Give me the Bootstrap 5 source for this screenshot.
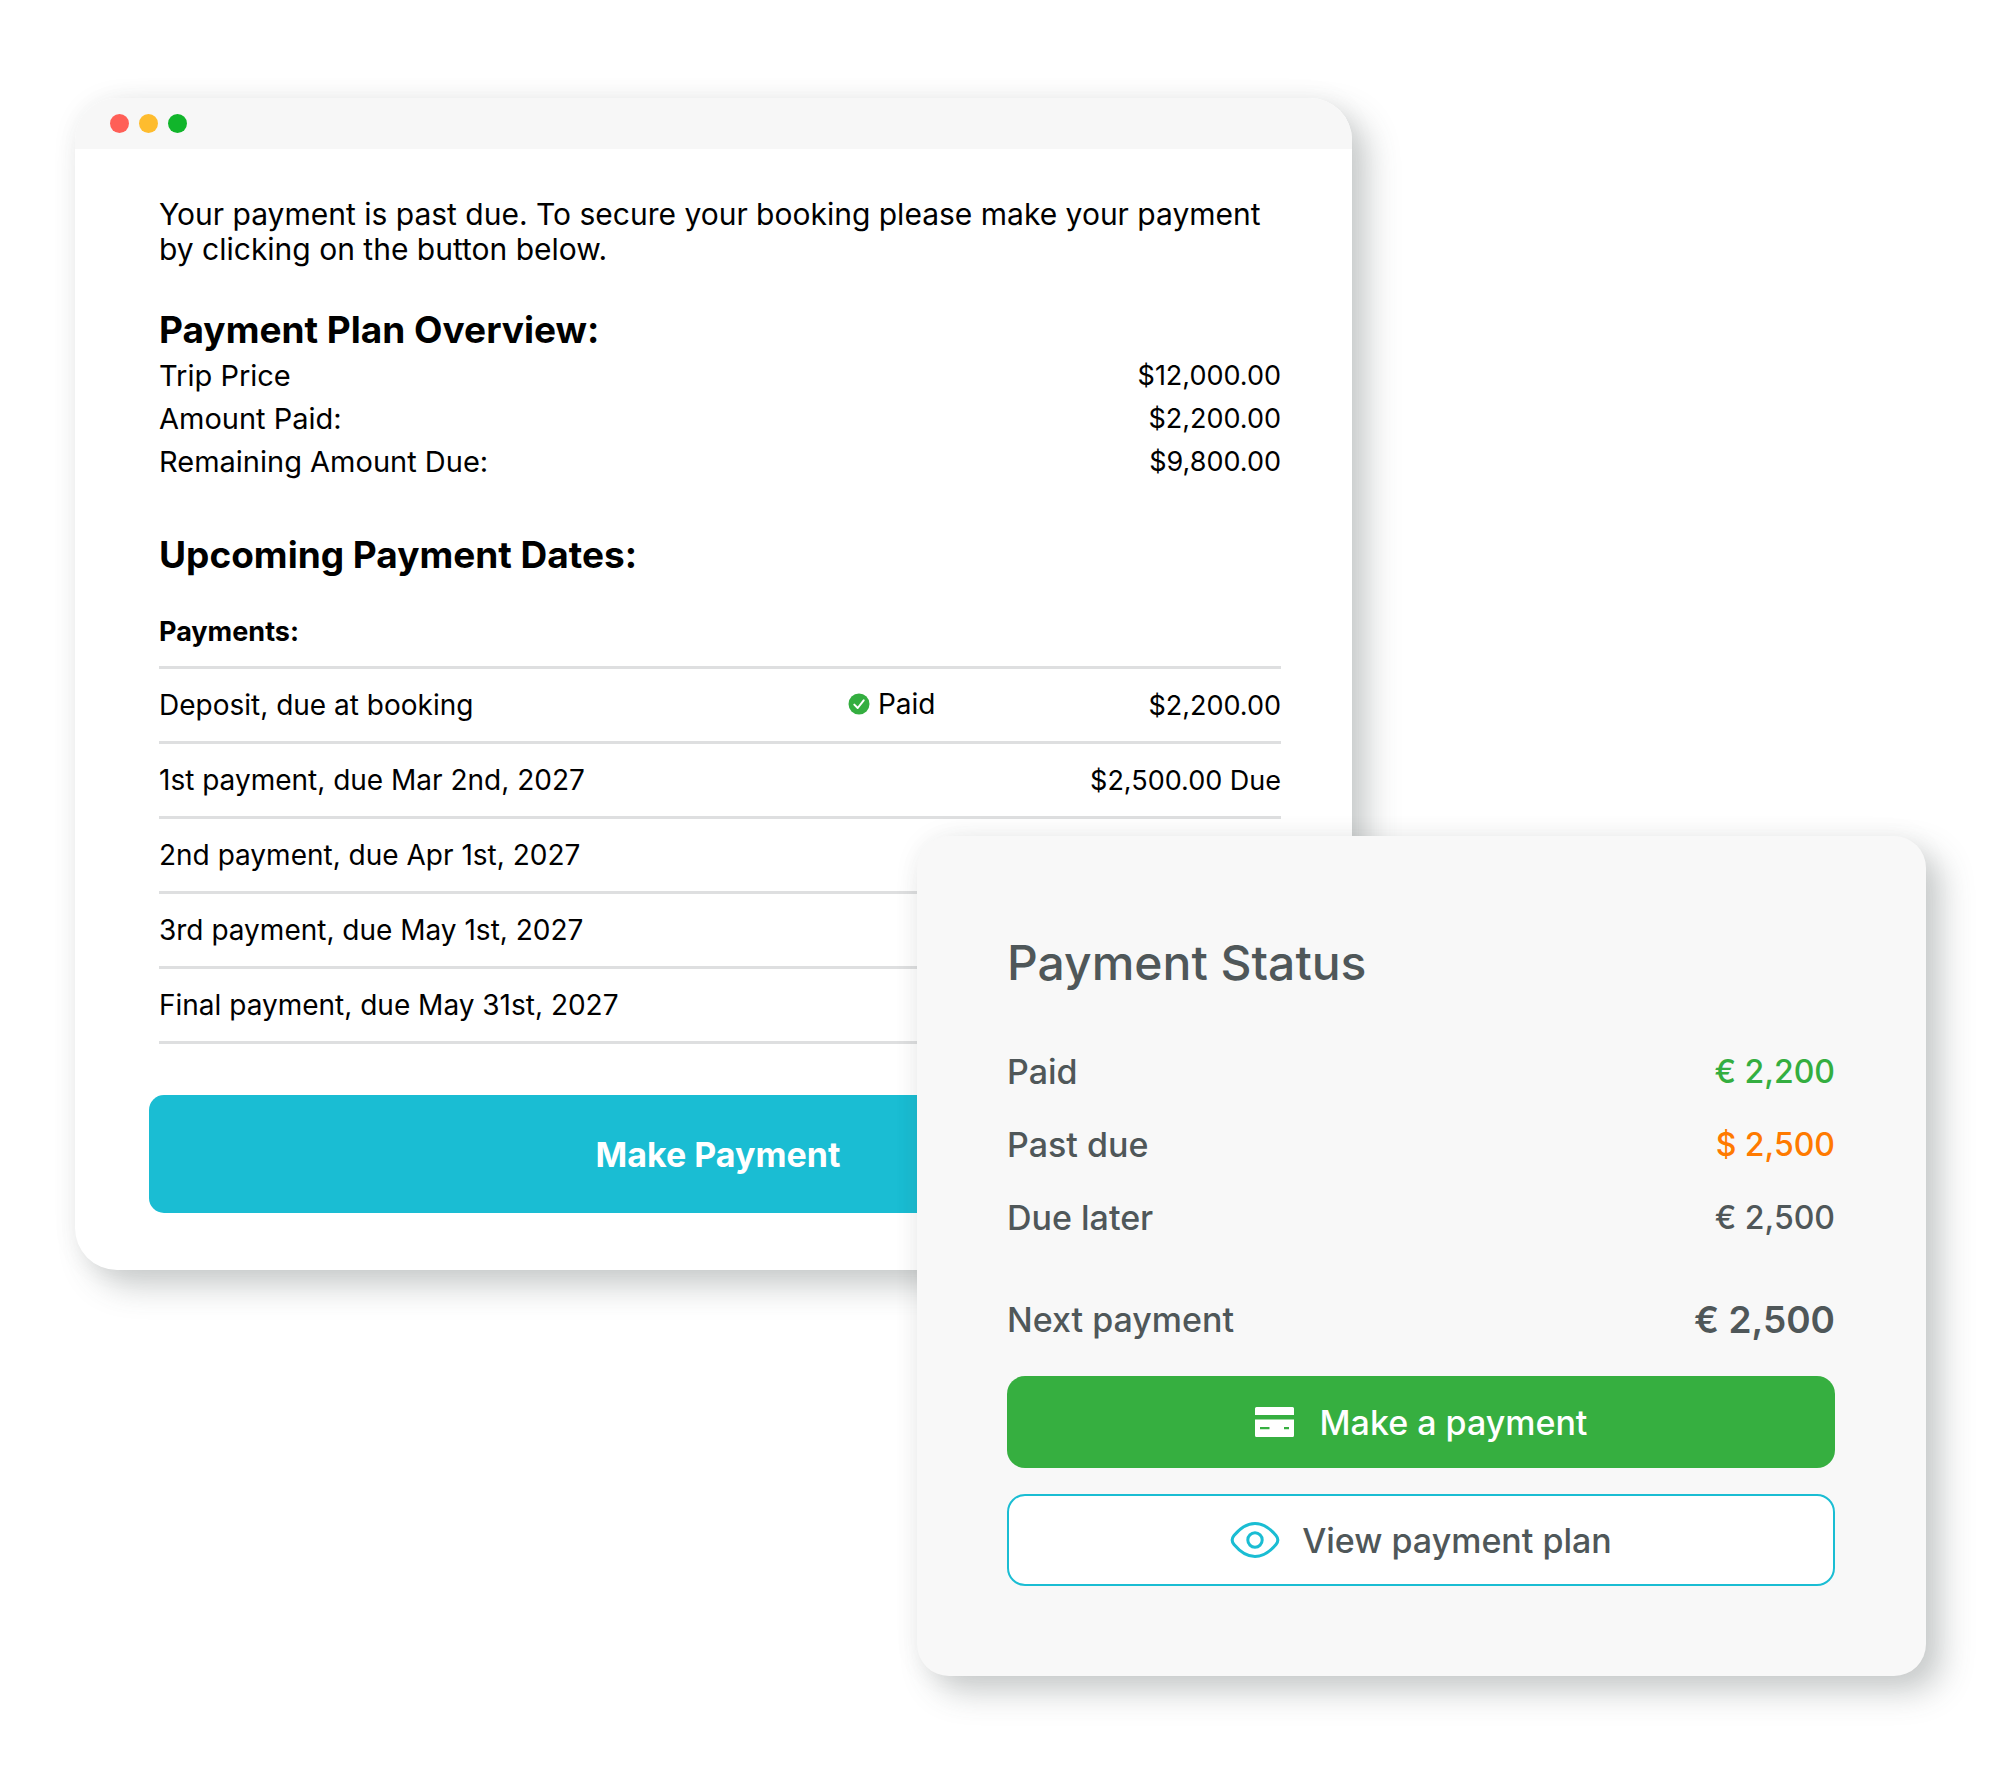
<!DOCTYPE html>
<html lang="en">
<head>
<meta charset="utf-8">
<meta name="viewport" content="width=device-width, initial-scale=1">
<title>Payment overview</title>
<link href="https://cdn.jsdelivr.net/npm/bootstrap@5.3.0/dist/css/bootstrap.min.css" rel="stylesheet">
<style>
  body { font-family: Inter, "Open Sans", sans-serif; background: #fff; color: #000; }
  .stage { padding: 98px 0; overflow: hidden; }
  .pane { box-shadow: 16px 16px 32px rgba(70, 80, 80, .28), 0 0 28px rgba(0, 0, 0, .05); }

  .browser { width: 63.85%; margin-left: 3.75%; border-radius: 42px; background: #fff; }
  .browser-bar { height: 51px; padding-left: 35px; gap: 10px; border-radius: 42px 42px 0 0; background: #f7f7f7; }
  .dot { width: 19px; height: 19px; }
  .dot-red { background: #ff5f57; }
  .dot-amber { background: #febc2e; }
  .dot-green { background: #11b52b; }

  .browser-body { padding: 48px 71px 0 84px; font-size: 30px; line-height: 35px; }
  .section-title { font-size: 37px; line-height: 44px; font-weight: 700; margin: 41px 0 4px; }
  .totals { font-size: 29px; line-height: 40px; }
  .totals > div + div { margin-top: 3px; }
  .sum { font-size: 27px; }
  .section-title.dates { margin-top: 51px; margin-bottom: 35px; }

  .schedule { border-collapse: separate; border-spacing: 0; color: #000; }
  .schedule > :not(caption) > * > * {
    height: 75px; padding: 0; border-bottom: 3px solid #dedfe0;
    font-size: 28px; line-height: 35px; vertical-align: middle; color: #000;
  }
  .schedule > tbody > tr > .sum { font-size: 27px; }
  .schedule > thead > tr > th { height: 57px; padding-bottom: 14px; font-size: 27px; line-height: 40px; }
  .col-name { width: 61.4%; }
  .check { width: 22px; height: 22px; }

  .browser-foot { padding: 51px 65px 57px 74px; }
  .btn-plan {
    --bs-btn-color: #fff; --bs-btn-bg: #1abdd3; --bs-btn-hover-color: #fff; --bs-btn-hover-bg: #17a9bd;
    height: 118px; border: 0; border-radius: 15px; font-size: 34px; font-weight: 700;
  }

  .status { width: 50.45%; margin: -434px 3.7% 0 auto; padding: 99px 91px 90px 90px; border-radius: 32px; background: #f8f8f8; color: #4f5759; font-size: 34px; font-weight: 500; }
  .status-title { font-size: 48px; line-height: 56px; font-weight: 500; margin: 0 0 44px; }
  .status-row { line-height: 73px; }
  .status-sum { font-size: 32px; }
  .next-row { margin-top: 29px; margin-bottom: 20px; }
  .next-sum { font-size: 37px; font-weight: 600; }
  .ok { color: #34ae40; }
  .late { color: #ff7a00; }
  .btn-status { height: 92px; border-radius: 18px; font-size: 34px; font-weight: 500; }
  .btn-pay {
    --bs-btn-color: #fff; --bs-btn-bg: #36af40; --bs-btn-hover-color: #fff; --bs-btn-hover-bg: #2f9c38;
    border: 0; gap: 26px; margin-bottom: 26px;
  }
  .btn-view {
    --bs-btn-color: #4f5759; --bs-btn-bg: #fff; --bs-btn-border-color: #1abdd3;
    --bs-btn-hover-color: #4f5759; --bs-btn-hover-bg: #eefafc; --bs-btn-hover-border-color: #1abdd3;
    border-width: 2px; gap: 22px;
  }
</style>
</head>
<body>
<main class="stage">
  <section class="browser pane">
    <div class="browser-bar d-flex align-items-center">
      <span class="dot dot-red rounded-circle"></span>
      <span class="dot dot-amber rounded-circle"></span>
      <span class="dot dot-green rounded-circle"></span>
    </div>
    <div class="browser-body">
      <p class="m-0">Your payment is past due. To secure your booking please make your payment by clicking on the button below.</p>
      <h2 class="section-title">Payment Plan Overview:</h2>
      <div class="totals">
        <div class="d-flex justify-content-between"><span>Trip Price</span><span class="sum">$12,000.00</span></div>
        <div class="d-flex justify-content-between"><span>Amount Paid:</span><span class="sum">$2,200.00</span></div>
        <div class="d-flex justify-content-between"><span>Remaining Amount Due:</span><span class="sum">$9,800.00</span></div>
      </div>
      <h2 class="section-title dates">Upcoming Payment Dates:</h2>
      <table class="table schedule m-0">
        <thead>
          <tr><th class="col-name" scope="col">Payments:</th><th></th><th></th></tr>
        </thead>
        <tbody>
          <tr>
            <td>Deposit, due at booking</td>
            <td><span class="d-inline-flex align-items-center gap-2">
              <svg class="check" viewBox="0 0 22 22" aria-hidden="true"><circle cx="11" cy="11" r="10.5" fill="#34ae40"/><path d="M6.3 11.6l3.4 3.4 6-7.6" fill="none" stroke="#fff" stroke-width="2" stroke-linecap="round" stroke-linejoin="round"/></svg>
              Paid</span></td>
            <td class="sum text-end">$2,200.00</td>
          </tr>
          <tr><td>1st payment, due Mar 2nd, 2027</td><td class="sum text-end" colspan="2">$2,500.00 Due</td></tr>
          <tr><td>2nd payment, due Apr 1st, 2027</td><td colspan="2"></td></tr>
          <tr><td>3rd payment, due May 1st, 2027</td><td colspan="2"></td></tr>
          <tr><td>Final payment, due May 31st, 2027</td><td colspan="2"></td></tr>
        </tbody>
      </table>
    </div>
    <div class="browser-foot">
      <button type="button" class="btn btn-plan w-100">Make Payment</button>
    </div>
  </section>

  <section class="status pane position-relative">
    <h1 class="status-title">Payment Status</h1>
    <div class="status-row d-flex justify-content-between"><span>Paid</span><span class="status-sum ok">€ 2,200</span></div>
    <div class="status-row d-flex justify-content-between"><span>Past due</span><span class="status-sum late">$ 2,500</span></div>
    <div class="status-row d-flex justify-content-between"><span>Due later</span><span class="status-sum">€ 2,500</span></div>
    <div class="status-row next-row d-flex justify-content-between"><span>Next payment</span><span class="next-sum">€ 2,500</span></div>
    <button type="button" class="btn btn-status btn-pay w-100 d-flex align-items-center justify-content-center">
      <svg width="39" height="30" viewBox="0 0 39 30" aria-hidden="true"><path fill="#fff" d="M1.500 0h36A1.500 1.500 0 0 1 39 1.500V8H0V1.500A1.500 1.500 0 0 1 1.500 0z"/><path fill="#fff" fill-rule="evenodd" d="M0 12.500h39v16a1.500 1.500 0 0 1-1.500 1.500h-36A1.500 1.500 0 0 1 0 28.500zM5 20v2.200h9.500V20zM29 20v2.200h5V20z"/></svg>
      Make a payment
    </button>
    <button type="button" class="btn btn-status btn-view w-100 d-flex align-items-center justify-content-center">
      <svg width="50" height="38" viewBox="0 0 50 38" fill="none" stroke="#1abdd3" stroke-width="3" aria-hidden="true"><path d="M4 14.500C9 8.500 17 2.500 25 2.500S41 8.500 46 14.500C48.700 17.800 48.700 20.200 46 23.500C41 29.500 33 35.500 25 35.500S9 29.500 4 23.500C1.300 20.200 1.300 17.800 4 14.500z"/><circle cx="25" cy="19" r="7.200"/></svg>
      View payment plan
    </button>
  </section>
</main>
<script src="https://cdn.jsdelivr.net/npm/bootstrap@5.3.0/dist/js/bootstrap.bundle.min.js"></script>
</body>
</html>
